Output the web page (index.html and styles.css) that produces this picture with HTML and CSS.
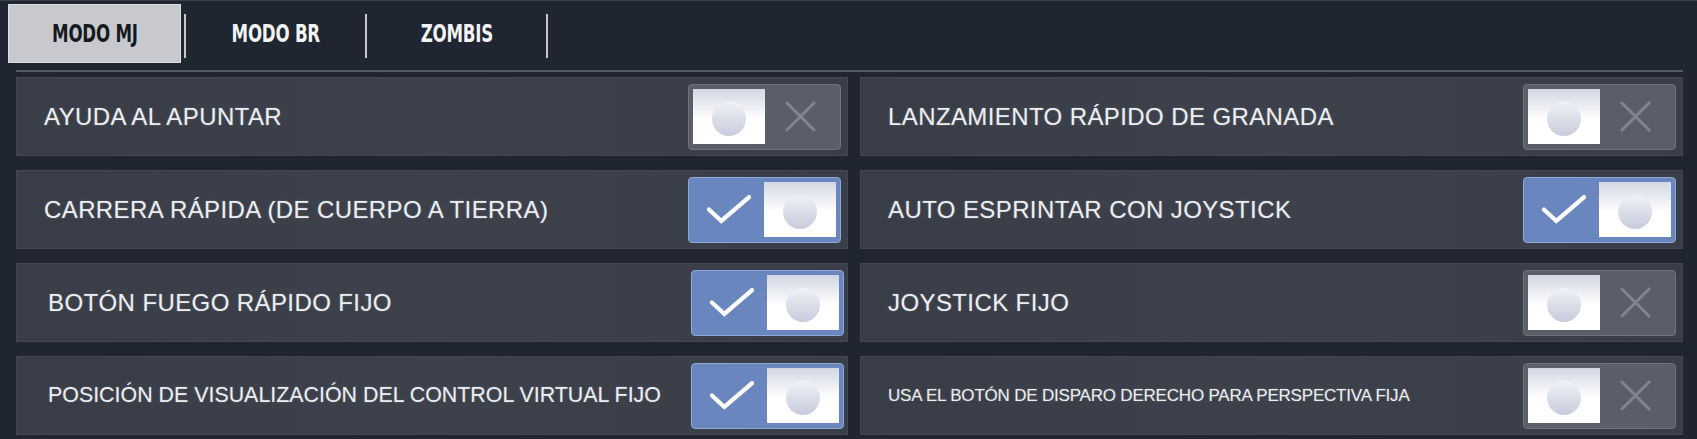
FILE: index.html
```html
<!DOCTYPE html>
<html lang="es">
<head>
  <meta charset="UTF-8">
  <title>Ajustes de controles</title>
  <link rel="stylesheet" href="styles.css">
</head>
<body>
<div class="screen">
  <!-- TABS -->
  <div class="tabs">
    <div class="tab active"><span>MODO MJ</span></div>
    <span class="sep"></span>
    <div class="tab"><span>MODO BR</span></div>
    <span class="sep"></span>
    <div class="tab"><span>ZOMBIS</span></div>
    <span class="sep"></span>
  </div>
  <div class="rule"></div>

  <!-- OPTIONS -->
  <div class="grid">
    <div class="row"><span class="label">AYUDA AL APUNTAR</span>
      <div class="toggle off"><span class="knob"><i></i></span><span class="mark"><svg viewBox="0 0 32 32"><path d="M2 2L30 30M30 2L2 30"/></svg></span></div></div>
    <div class="row"><span class="label">LANZAMIENTO RÁPIDO DE GRANADA</span>
      <div class="toggle off"><span class="knob"><i></i></span><span class="mark"><svg viewBox="0 0 32 32"><path d="M2 2L30 30M30 2L2 30"/></svg></span></div></div>

    <div class="row"><span class="label">CARRERA RÁPIDA (DE CUERPO A TIERRA)</span>
      <div class="toggle on"><span class="mark"><svg viewBox="0 0 46 30"><path d="M2 15L15 27L44 2"/></svg></span><span class="knob"><i></i></span></div></div>
    <div class="row"><span class="label">AUTO ESPRINTAR CON JOYSTICK</span>
      <div class="toggle on"><span class="mark"><svg viewBox="0 0 46 30"><path d="M2 15L15 27L44 2"/></svg></span><span class="knob"><i></i></span></div></div>

    <div class="row shift"><span class="label">BOTÓN FUEGO RÁPIDO FIJO</span>
      <div class="toggle on"><span class="mark"><svg viewBox="0 0 46 30"><path d="M2 15L15 27L44 2"/></svg></span><span class="knob"><i></i></span></div></div>
    <div class="row"><span class="label">JOYSTICK FIJO</span>
      <div class="toggle off"><span class="knob"><i></i></span><span class="mark"><svg viewBox="0 0 32 32"><path d="M2 2L30 30M30 2L2 30"/></svg></span></div></div>

    <div class="row shift"><span class="label fit">POSICIÓN DE VISUALIZACIÓN DEL CONTROL VIRTUAL FIJO</span>
      <div class="toggle on"><span class="mark"><svg viewBox="0 0 46 30"><path d="M2 15L15 27L44 2"/></svg></span><span class="knob"><i></i></span></div></div>
    <div class="row"><span class="label small">USA EL BOTÓN DE DISPARO DERECHO PARA PERSPECTIVA FIJA</span>
      <div class="toggle off"><span class="knob"><i></i></span><span class="mark"><svg viewBox="0 0 32 32"><path d="M2 2L30 30M30 2L2 30"/></svg></span></div></div>
  </div>
</div>
</body>
</html>
```

FILE: styles.css
```css
:root{
  --bg:#1f2531;
  --card:#393e48;
  --text:#eceef2;
  --blue:#6986bf;
  --grey:#595e68;
}
*{box-sizing:border-box;margin:0;padding:0}
body{background:var(--bg);font-family:'Liberation Sans',Arial,sans-serif;color:var(--text);width:1697px;height:439px;overflow:hidden}
.screen{padding:0 14px 0 0;border-top:1px solid #3a404b}

/* tabs */
.tabs{display:flex;align-items:center;height:66px;padding:3px 0 0 8px}
.tab{width:173px;height:59px;display:flex;align-items:center;justify-content:center;font-family:'DejaVu Sans Condensed','DejaVu Sans',sans-serif;font-weight:700;font-size:25px;color:#f2f3f5;align-self:flex-start}
.tab span{display:inline-block;transform:scaleX(.74);letter-spacing:-.3px}
.tab.active{background:#c7c9ce;color:#16191e;border:1px solid #dcdee2}
.sep{width:2px;height:44px;background:#c4c8ce;margin:0 3px}
.rule{height:2px;background:#545a64;margin:3px 0 0 16px}

/* option grid */
.grid{display:grid;grid-template-columns:832px 1fr;grid-auto-rows:79px;column-gap:12px;row-gap:14px;margin:5px 0 0 16px}
.row{background:linear-gradient(90deg,#383d47,#3c414b 50%,#393e48);border:1px solid #41464f;display:flex;align-items:center;justify-content:space-between;padding:0 6px 0 27px}
.row.shift{padding-left:31px;padding-right:3px}
.label{font-size:24px;letter-spacing:.4px;white-space:nowrap;text-shadow:0 0 2px rgba(255,255,255,.25)}
.label.fit{font-size:21.4px;letter-spacing:0}
.label.small{font-size:17px;letter-spacing:-.2px}

/* toggle */
.toggle{width:153px;height:66px;border-radius:4px;display:flex;align-items:center;padding:0 4px;flex:none}
.toggle.off{background:var(--grey);border:1px solid #6e737d}
.toggle.on{background:var(--blue);border:1px solid #8ea7d6}
.knob{width:72px;height:55px;background:linear-gradient(#d3d7e3,#fff 55%);display:flex;align-items:center;justify-content:center;flex:none}
.knob i{width:34px;height:34px;border-radius:50%;background:linear-gradient(#f1f2f7,#c6cbdc);margin-top:4px}
.mark{flex:1;display:flex;align-items:center;justify-content:center}
.mark svg{fill:none;stroke-linecap:round}
.off .mark svg{width:31px;height:31px;stroke:#80868f;stroke-width:3}
.on .mark svg{width:44px;height:29px;stroke:#fff;stroke-width:4.5}
```
